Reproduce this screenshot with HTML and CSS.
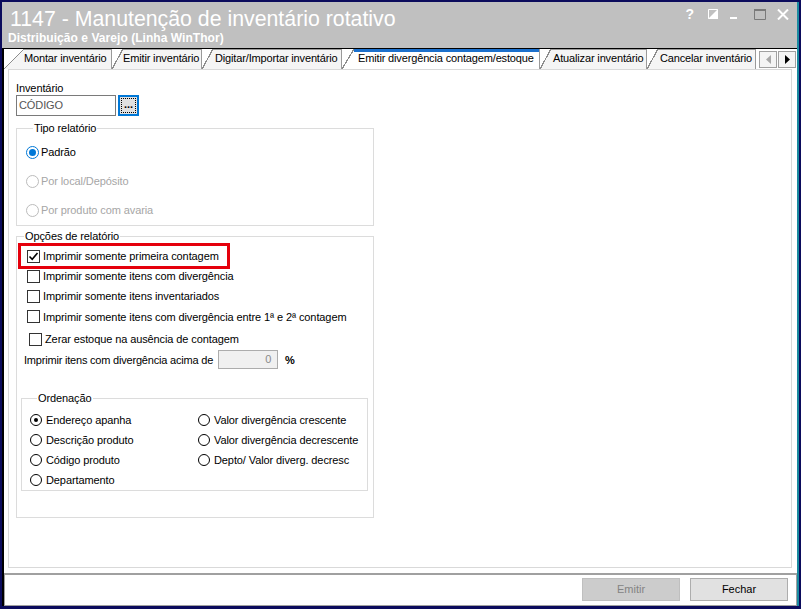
FILE: index.html
```html
<!DOCTYPE html>
<html lang="pt-BR">

<head>
    <meta charset="UTF-8">
    <title>1147 - Manutenção de inventário rotativo</title>
    <link rel="stylesheet" href="styles.css">
</head>

<body>
    <div class="window">
        <div class="titlebar">
            <div class="titles">
                <h1>1147 - Manutenção de inventário rotativo</h1>
                <p class="subtitle">Distribuição e Varejo (Linha WinThor)</p>
            </div>
            <div class="controls">
                <span class="help">?</span>
                <svg class="ico-snap" width="10" height="10" viewBox="0 0 10 10"><path d="M0.5 0.5h9v9h-9z" fill="none" stroke="#fff"/><path d="M0 10L10 0V10z" fill="#fff"/></svg>
                <svg class="ico-min" width="7" height="10" viewBox="0 0 7 10"><path d="M0 8h7v2h-7z" fill="#fff"/></svg>
                <svg class="ico-max" width="12" height="11" viewBox="0 0 12 11"><path d="M0.5 1.5h11v9h-11z" fill="none" stroke="#7a7a7a"/><path d="M0 0h12v2h-12z" fill="#7a7a7a"/></svg>
                <svg class="ico-close" width="12" height="11" viewBox="0 0 12 11"><path d="M1 0.5L11 10.5M11 0.5L1 10.5" stroke="#fff" stroke-width="2"/></svg>
            </div>
        </div>

        <div class="client">
            <div class="tabs">
                <div class="tab first" style="width: 108px;">Montar inventário</div>
                <div class="tab" style="width: 90px;">Emitir inventário</div>
                <div class="tab wide-pad" style="width: 140px;">Digitar/Importar inventário</div>
                <div class="tab active" style="width: 198px;">Emitir divergência contagem/estoque</div>
                <div class="tab wide-pad" style="width: 107px;">Atualizar inventário</div>
                <div class="tab wide-pad" style="width: 109px;">Cancelar inventário</div>
                <div class="scroller">
                    <span class="arrow-btn"><svg width="5" height="9" viewBox="0 0 5 9"><path d="M5 0V9L0 4.5z" fill="#a8a8a8"/></svg></span>
                    <span class="arrow-btn"><svg width="5" height="9" viewBox="0 0 5 9"><path d="M0 0V9L5 4.5z" fill="#000"/></svg></span>
                </div>
            </div>

            <div class="panel">
                <div class="field-label">Inventário</div>
                <div class="lookup">
                    <div class="textbox">CÓDIGO</div>
                    <div class="dots-btn"><span>...</span></div>
                </div>

                <fieldset class="group tipo">
                    <legend>Tipo relatório</legend>
                    <div class="radio-row">
                        <span class="radio checked"></span>Padrão
                    </div>
                    <div class="radio-row disabled">
                        <span class="radio"></span>Por local/Depósito
                    </div>
                    <div class="radio-row disabled">
                        <span class="radio"></span>Por produto com avaria
                    </div>
                </fieldset>

                <fieldset class="group opcoes">
                    <legend>Opções de relatório</legend>
                    <div class="check-row highlight">
                        <span class="check"><svg width="11" height="11" viewBox="0 0 11 11"><path d="M1.5 5.5L4.2 8.2L9.5 2" fill="none" stroke="#000" stroke-width="1.6"/></svg></span>Imprimir somente primeira contagem
                    </div>
                    <div class="check-row"><span class="check"></span>Imprimir somente itens com divergência</div>
                    <div class="check-row"><span class="check"></span>Imprimir somente itens inventariados</div>
                    <div class="check-row"><span class="check"></span>Imprimir somente itens com divergência entre 1ª e 2ª contagem</div>
                    <div class="check-row zerar"><span class="check"></span>Zerar estoque na ausência de contagem</div>
                    <div class="percent-row">
                        Imprimir itens com divergência acima de
                        <div class="num-box">0</div>
                        <b>%</b>
                    </div>

                    <fieldset class="group ordem">
                        <legend>Ordenação</legend>
                        <div class="ordem-grid">
                            <div class="opt"><span class="dot on"></span>Endereço apanha</div>
                            <div class="opt"><span class="dot"></span>Valor divergência crescente</div>
                            <div class="opt"><span class="dot"></span>Descrição produto</div>
                            <div class="opt"><span class="dot"></span>Valor divergência decrescente</div>
                            <div class="opt"><span class="dot"></span>Código produto</div>
                            <div class="opt"><span class="dot"></span>Depto/ Valor diverg. decresc</div>
                            <div class="opt"><span class="dot"></span>Departamento</div>
                        </div>
                    </fieldset>
                </fieldset>
            </div>

            <div class="footer">
                <button class="btn" disabled>Emitir</button>
                <button class="btn">Fechar</button>
            </div>
        </div>
    </div>
</body>

</html>
```

FILE: styles.css
```css
*{
    margin: 0;
    padding: 0;
    box-sizing: border-box;
}
body{
    background-color: #0b0b5c;
    font-family: "Liberation Sans", Arial, sans-serif;
    font-size: 11px;
    letter-spacing: -0.1px;
    color: #000;
}
.window {
    width: 801px;
    height: 609px;
    border: 2px solid #0b0b5c;
    border-bottom-width: 3px;
    border-right: 2px solid #0b0b5c;
    background-color: #c0c0c0;
    box-shadow: inset -2px 0 #1a8aa0;
    display: flex;
    flex-direction: column;
}

/* barra de titulo */
.titlebar {
    height: 46px;
    display: flex;
    justify-content: space-between;
    padding-left: 6px;
    padding-right: 10px;
}
.titlebar h1 {
    font-weight: normal;
    font-size: 21.3px;
    letter-spacing: 0;
    color: #fff;
    line-height: 22px;
    padding-top: 6px;
    padding-left: 2px;
}
.subtitle {
    color: #fff;
    font-weight: bold;
    font-size: 12px;
    letter-spacing: 0.05px;
    line-height: 12px;
    padding-top: 2px;
}
.controls {
    display: flex;
    align-items: center;
    height: 24px;
}
.help {
    color: #fff;
    font-weight: bold;
    font-size: 14px;
}
.ico-snap {
    margin-left: 14px;
}
.ico-min {
    margin-left: 12px;
}
.ico-max {
    margin-left: 17px;
}
.ico-close {
    margin-left: 11px;
}

/* area do form */
.client {
    flex: 1;
    background-color: #fff;
    border-top: 1px solid #000;
    border-left: 2px solid #000;
    margin-right: 2px;
    display: flex;
    flex-direction: column;
}
.tabs {
    height: 20px;
    display: flex;
    align-items: stretch;
}
.tab {
    flex-shrink: 0;
    white-space: nowrap;
    overflow: hidden;
    line-height: 19px;
    padding-left: 11px;
    letter-spacing: -0.15px;
    border-right: 1px solid #9a9a9a;
    background:
        linear-gradient(#9a9a9a, #9a9a9a) 11px 0 / 100% 1px no-repeat,
        linear-gradient(to bottom right, #fff calc(50% - 0.6px), #8c8c8c calc(50% - 0.6px), #8c8c8c calc(50% + 0.6px), #f5f5f5 calc(50% + 0.6px)) 0 0 / 11px 100% no-repeat,
        linear-gradient(#f5f5f5, #f5f5f5) 11px 0 / 100% 100% no-repeat;
}
.tab.wide-pad {
    padding-left: 13px;
}
.tab.first {
    padding-left: 20px;
    background:
        linear-gradient(#9a9a9a, #9a9a9a) 20px 0 / 100% 1px no-repeat,
        linear-gradient(to bottom right, #fff calc(50% - 0.6px), #8c8c8c calc(50% - 0.6px), #8c8c8c calc(50% + 0.6px), #f5f5f5 calc(50% + 0.6px)) 0 0 / 20px 100% no-repeat,
        linear-gradient(#f5f5f5, #f5f5f5) 20px 0 / 100% 100% no-repeat;
}
.tab.active {
    padding-left: 16px;
    background:
        linear-gradient(#1c70cc, #1c70cc) 12px 0 / 100% 3px no-repeat,
        linear-gradient(to bottom right, #fff calc(50% - 0.6px), #8c8c8c calc(50% - 0.6px), #8c8c8c calc(50% + 0.6px), #fff calc(50% + 0.6px)) 0 0 / 12px 100% no-repeat,
        #fff;
}
.scroller {
    display: flex;
    gap: 1px;
    margin-left: 3px;
    padding-top: 2px;
}
.arrow-btn {
    width: 18px;
    height: 17px;
    border: 1px solid #a0a0a0;
    background-color: #f4f4f4;
    display: flex;
    align-items: center;
    justify-content: center;
}

.panel {
    height: 499px;
    margin: 0 5px 0 4px;
    border: 1px solid #d9d9d9;
    padding: 12px 0 0 7px;
}
.field-label {
    line-height: 13px;
}
.lookup {
    display: flex;
    gap: 2px;
}
.textbox {
    width: 100px;
    height: 21px;
    border: 1px solid #7a7a7a;
    padding-left: 2px;
    line-height: 19px;
    color: #555;
}
.dots-btn {
    width: 21px;
    height: 21px;
    border: 2px solid #0078d7;
    background-color: #e1e1e1;
    padding: 1px;
}
.dots-btn span {
    display: block;
    height: 100%;
    border: 1px dotted #000;
    text-align: center;
    line-height: 10px;
    font-weight: bold;
}

.group {
    border: 1px solid #dcdcdc;
    width: 358px;
}
.group legend {
    margin-left: 7px;
    padding: 0 1px;
    line-height: 13px;
}
.tipo {
    margin-top: 6px;
    padding: 9px 0 7px 9px;
    display: flex;
    flex-direction: column;
    gap: 13px;
}
.radio-row {
    display: flex;
    align-items: center;
    height: 16px;
}
.radio-row.disabled {
    color: #a6a6a6;
}
.radio {
    width: 13px;
    height: 13px;
    border: 1px solid #bcbcbc;
    border-radius: 50%;
    margin-right: 2px;
    display: flex;
    align-items: center;
    justify-content: center;
}
.radio.checked {
    border-color: #0078d7;
}
.radio.checked::after {
    content: "";
    width: 7px;
    height: 7px;
    border-radius: 50%;
    background-color: #0078d7;
}

.opcoes {
    margin-top: 4px;
    height: 288px;
    padding: 5px 0 0 0;
}
.check-row {
    display: flex;
    align-items: center;
    height: 16px;
    margin-left: 10px;
    margin-bottom: 4.2px;
}
.check-row.zerar {
    margin-left: 12px;
    margin-top: 6.5px;
}
.check-row.highlight {
    outline: 3px solid #e5000c;
    outline-offset: 2px;
    margin-left: 6px;
    padding-left: 4px;
    width: 202px;
}
.check {
    width: 13px;
    height: 13px;
    border: 1px solid #333;
    margin-right: 3px;
    display: flex;
    align-items: center;
    justify-content: center;
}
.percent-row {
    display: flex;
    align-items: center;
    height: 19px;
    margin-left: 7px;
    margin-top: -1px;
    letter-spacing: -0.2px;
}
.num-box {
    width: 60px;
    height: 19px;
    margin-left: 5px;
    margin-right: 7px;
    border: 1px solid #acacac;
    background-color: #f0f0f0;
    color: #8a8a8a;
    text-align: right;
    padding-right: 6px;
    line-height: 17px;
}

.ordem {
    width: 347px;
    margin: 22.5px 0 0 4px;
    padding: 7px 0 2px 8px;
}
.ordem-grid {
    display: grid;
    grid-template-columns: 168px 1fr;
    row-gap: 4px;
}
.opt {
    display: flex;
    align-items: center;
    height: 16px;
}
.dot {
    width: 12px;
    height: 12px;
    border: 1px solid #000;
    border-radius: 50%;
    margin-right: 4px;
    display: flex;
    align-items: center;
    justify-content: center;
}
.dot.on::after {
    content: "";
    width: 4px;
    height: 4px;
    border-radius: 50%;
    background-color: #000;
}

.footer {
    margin-top: 5px;
    flex: 1;
    border: 1px solid #a0a0a0;
    border-top-width: 2px;
    display: flex;
    justify-content: flex-end;
    align-items: center;
    gap: 10px;
    padding-right: 8px;
    padding-bottom: 2px;
}
.btn {
    width: 98px;
    height: 23px;
    border: 1px solid #adadad;
    background-color: #e1e1e1;
    font-family: "Liberation Sans", Arial, sans-serif;
    font-size: 11px;
    color: #000;
}
.btn:disabled {
    background-color: #cccccc;
    border-color: #bfbfbf;
    color: #838383;
}
```
